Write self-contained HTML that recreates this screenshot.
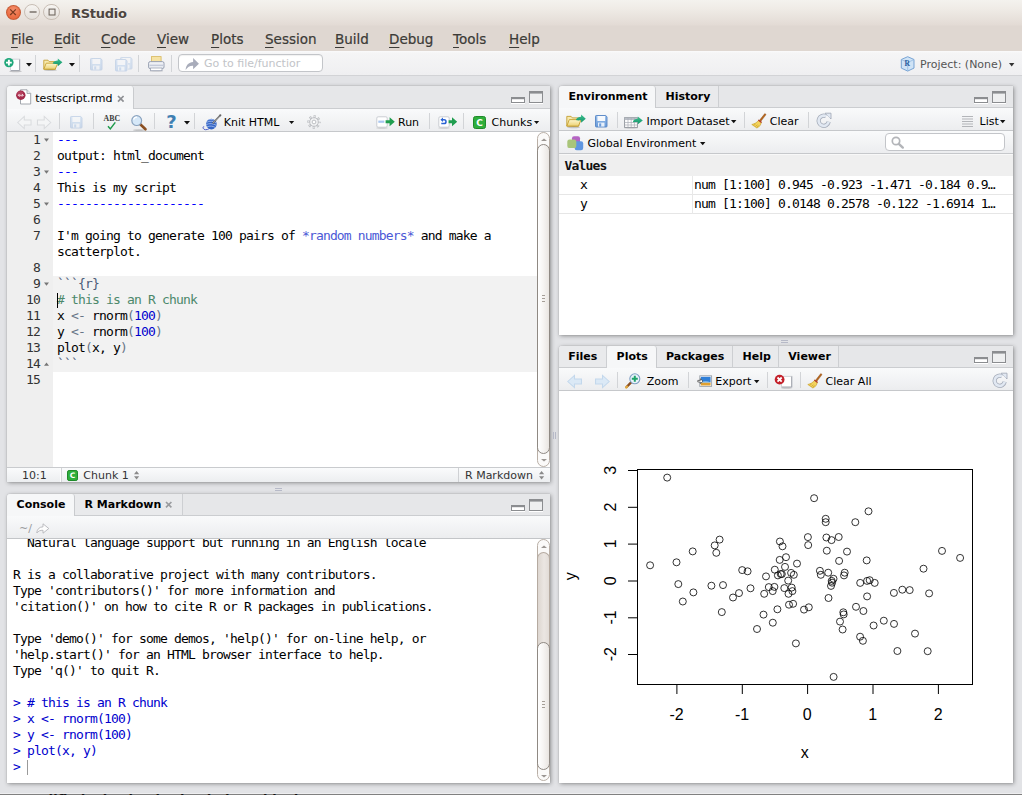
<!DOCTYPE html>
<html><head><meta charset="utf-8"><title>RStudio</title>
<style>
*{box-sizing:border-box;margin:0;padding:0}
html,body{width:1022px;height:795px;overflow:hidden}
body{position:relative;background:#e2e3e6;font-family:"DejaVu Sans","Liberation Sans",sans-serif;font-size:11px;color:#000}
.a{position:absolute}
svg{position:absolute;overflow:visible}
#titlebar{left:0;top:0;width:1022px;height:51px;background:linear-gradient(#f4f2ee 0,#efebe6 9px,#e3dbd5 25px,#dfd7d1 26px,#dfd7d1 51px)}
#title{left:71px;top:5px;font:bold 13px/17px "DejaVu Sans","Liberation Sans",sans-serif;color:#4c4540;letter-spacing:-.27px;text-shadow:0 1px 0 rgba(255,255,255,.6)}
.menu{-webkit-text-stroke:.2px #3c3b37;top:30px;font:13.5px/18px "DejaVu Sans","Liberation Sans",sans-serif;color:#3c3b37;white-space:nowrap}
.menu u{text-decoration:underline;text-underline-offset:3px}
.wb{border-radius:50%;width:15px;height:15px;top:5px}
#toolbar{left:0;top:51px;width:1022px;height:25px;background:linear-gradient(#fafafb 0,#f5f5f6 2px,#efeff1);border-bottom:1px solid #d2d3d6}
.pane{background:#fff;border-radius:3px 0 0 0;box-shadow:1px 1px 4px rgba(0,0,0,.36),0 0 1px rgba(0,0,0,.3);overflow:hidden}
.tabbar{left:0;top:0;right:0;height:22px;background:#e6e7e9;border-bottom:1px solid #cbcdd0}
.tab{top:0;height:22px;font-weight:bold;line-height:21px;white-space:nowrap;color:#000}
.tab.act{background:#f6f7f8;height:22px;border-right:1px solid #c9cbce;border-radius:3px 3px 0 0}
.tab.in{border-right:1px solid #cdcfd2;border-bottom:1px solid #cbcdd0;background:#e9eaec}
.tb{left:0;right:0;background:linear-gradient(#f9fafb,#ecedef);border-bottom:1px solid #c6c8cb;white-space:nowrap}
.t{white-space:nowrap;line-height:14px;height:15px;padding-top:1px}
.sep{width:1px;background:#d2d4d7}
.mono{font-family:"DejaVu Sans Mono","Liberation Mono",monospace;font-size:13px;letter-spacing:-.83px;white-space:pre;line-height:16px}
.dd{width:0;height:0;border-left:3.5px solid transparent;border-right:3.5px solid transparent;border-top:4px solid #111}
.k{color:#0000ff}
.em{color:#4b59d6}
.ch{color:#4a5a78}
.cm{color:#4c886b}
.op{color:#687687}
.nu{color:#0000cd}
.bl{color:#0000cd}

</style></head><body>
<div id="titlebar" class="a"></div>
<div class="a wb" style="left:5.700px;top:4.500px;width:15.400px;height:15.400px;background:radial-gradient(circle at 50% 30%,#f4906e,#ec6f45 60%,#e5623a);border:1px solid rgba(170,75,40,.55)"></div>
<svg style="left:9.400px;top:8.200px" width="8" height="8"><path d="M1.200 1.400L6.800 7M6.800 1.400L1.200 7" stroke="#7a3a20" stroke-width="1.200"/></svg>
<div class="a wb" style="left:24px;top:4.100px;width:16.400px;height:16.400px;background:linear-gradient(#f7f5f2,#e4dfda);border:1px solid #c8beb5"></div>
<svg style="left:28.500px;top:8.200px" width="8" height="8"><path d="M0.600 4H7.600" stroke="#5d544c" stroke-width="1.200"/></svg>
<div class="a wb" style="left:43.300px;top:4.100px;width:16.400px;height:16.400px;background:linear-gradient(#f7f5f2,#e4dfda);border:1px solid #c8beb5"></div>
<svg style="left:47.500px;top:8.300px" width="8" height="8"><rect x="1.100" y="1.100" width="5.900" height="5.900" fill="none" stroke="#6d645c" stroke-width="1.050"/></svg>
<div id="title" class="a">RStudio</div>
<div class="a menu" style="left:11px"><u>F</u>ile</div>
<div class="a menu" style="left:54px"><u>E</u>dit</div>
<div class="a menu" style="left:101px"><u>C</u>ode</div>
<div class="a menu" style="left:157px"><u>V</u>iew</div>
<div class="a menu" style="left:211px"><u>P</u>lots</div>
<div class="a menu" style="left:265px"><u>S</u>ession</div>
<div class="a menu" style="left:335px"><u>B</u>uild</div>
<div class="a menu" style="left:389px"><u>D</u>ebug</div>
<div class="a menu" style="left:453px"><u>T</u>ools</div>
<div class="a menu" style="left:509px"><u>H</u>elp</div>
<div id="toolbar" class="a"></div>

<svg width="0" height="0" style="left:0;top:0"><defs>
<linearGradient id="gFold" x1="0" y1="0" x2="0" y2="1"><stop offset="0" stop-color="#fdf6cf"/><stop offset="1" stop-color="#ecd273"/></linearGradient>
<linearGradient id="gFlop" x1="0" y1="0" x2="0" y2="1"><stop offset="0" stop-color="#96bdea"/><stop offset="1" stop-color="#6a9bd9"/></linearGradient>
<linearGradient id="gGreen" x1="0" y1="0" x2="0" y2="1"><stop offset="0" stop-color="#3fc08f"/><stop offset="1" stop-color="#12946a"/></linearGradient>
</defs></svg>
<!-- main toolbar -->
<svg style="left:4px;top:56.500px" width="20" height="16"><ellipse cx="11.500" cy="14.300" rx="6.500" ry=".9" fill="#000" opacity=".2"/><path d="M6.500 2.200h9.500v11.600h-9.500z" fill="#fff" stroke="#c9ccd2" stroke-width=".8"/><path d="M15.500 2.500v11h-8.500" fill="none" stroke="#9fa3ab" stroke-width=".9"/><circle cx="4.900" cy="5.600" r="4.700" fill="#1fa77a"/><path d="M4.900 2.700v5.800M2 5.600h5.800" stroke="#fff" stroke-width="1.900"/></svg>
<svg style="left:25.500px;top:62.500px" width="6" height="4"><g><path d="M0 0h6l-3 3.600z" fill="#111"/></g></svg>
<div class="a sep" style="left:35px;top:55px;height:17px"></div>
<svg style="left:43px;top:57.500px" width="21" height="14"><g><path d="M0.8 2.2h4.2l1.2 1.4h6.3v7.6h-11.7z" fill="#f6e9ad" stroke="#c6a136" stroke-width=".9"/><path d="M0.8 11.2l2.4-6h11.6l-2.6 6z" fill="url(#gFold)" stroke="#c8a233" stroke-width=".9"/><path d="M9.6 5.6c1-2.2 3-3 5.2-3v-2.2l4.6 3.9-4.6 3.9v-2.3c-2 0-3.6 .2-5.200 -.3z" fill="url(#gGreen)"/><ellipse cx="7.500" cy="12.3" rx="6.500" ry=".8" fill="#000" opacity=".18"/></g></svg>
<svg style="left:68.500px;top:62.500px" width="6" height="4"><g><path d="M0 0h6l-3 3.600z" fill="#111"/></g></svg>
<div class="a sep" style="left:79px;top:55px;height:17px"></div>
<svg style="left:90px;top:58px;opacity:.28" width="13" height="13"><g><path d="M.5 1.300a.8 .8 0 0 1 .8 -.8h9.400l1.300 1.300v9.400a.8 .8 0 0 1 -.8 .8h-9.900a.8 .8 0 0 1 -.8 -.8z" fill="url(#gFlop)" stroke="#5584c4" stroke-width=".9"/><rect x="2.400" y="1" width="7.700" height="5" fill="#f6f9fd"/><rect x="3" y="7.600" width="6.500" height="4" fill="#e8f0fa"/><rect x="4.200" y="8.400" width="2" height="3.200" fill="#6a9bd9"/></g></svg>
<svg style="left:119.500px;top:56.500px;opacity:.24" width="13" height="13"><g><path d="M.5 1.300a.8 .8 0 0 1 .8 -.8h9.400l1.300 1.300v9.400a.8 .8 0 0 1 -.8 .8h-9.900a.8 .8 0 0 1 -.8 -.8z" fill="url(#gFlop)" stroke="#5584c4" stroke-width=".9"/><rect x="2.400" y="1" width="7.700" height="5" fill="#f6f9fd"/><rect x="3" y="7.600" width="6.500" height="4" fill="#e8f0fa"/><rect x="4.200" y="8.400" width="2" height="3.200" fill="#6a9bd9"/></g></svg>
<svg style="left:114.500px;top:59px" width="13" height="13"><rect x="0" y="0" width="13" height="12.500" fill="#f3f3f5"/><g opacity=".28"><path d="M.5 1.300a.8 .8 0 0 1 .8 -.8h9.400l1.300 1.300v9.400a.8 .8 0 0 1 -.8 .8h-9.900a.8 .8 0 0 1 -.8 -.8z" fill="url(#gFlop)" stroke="#5584c4" stroke-width=".9"/><rect x="2.400" y="1" width="7.700" height="5" fill="#f6f9fd"/><rect x="3" y="7.600" width="6.500" height="4" fill="#e8f0fa"/><rect x="4.200" y="8.400" width="2" height="3.200" fill="#6a9bd9"/></g></svg>
<div class="a sep" style="left:138px;top:55px;height:17px"></div>
<svg style="left:148px;top:55.500px" width="17" height="16"><ellipse cx="8.300" cy="15" rx="7" ry=".8" fill="#000" opacity=".15"/><rect x="3.500" y=".6" width="9.600" height="7" fill="#f6e3a4" stroke="#d7b75c" stroke-width=".8"/><rect x=".6" y="5.600" width="15.400" height="7" rx="1.600" fill="#eef0f5" stroke="#8e97ab" stroke-width=".9"/><rect x="1.500" y="8.600" width="13.600" height="1.500" fill="#c5cbda"/><rect x="2.600" y="12" width="11.400" height="2.700" fill="#fff" stroke="#9aa1b2" stroke-width=".8"/></svg>
<div class="a sep" style="left:171px;top:55px;height:17px"></div>
<div class="a" style="left:178px;top:54px;width:145px;height:18px;border:1px solid #c3c5c9;border-radius:4px;background:#fff;box-shadow:inset 0 1px 1px rgba(0,0,0,.06)"></div>
<svg style="left:185px;top:57px" width="14" height="13"><path transform="scale(1.04,1.06)" d="M.6 12.300c.3-4.600 2.800-7.300 7.200-7.600v-3.700l5.600 5.300-5.600 5.300v-3.400c-3.200-.1-5.400 1.200-7.200 4.100z" fill="#a8acba"/></svg>
<div class="a t" style="left:204px;top:56px;color:#c2c4c8">Go to file/functior</div>
<svg style="left:900px;top:55.500px" width="16" height="16"><path d="M7.700 .7l6.300 2.800v8.600l-6.300 3-6.400-3v-8.600z" fill="#cfe3f6" stroke="#6b9bd0" stroke-width=".9"/><path d="M1.500 3.600l6.200 2.900 6.200-2.900M7.700 6.500v8.300" fill="none" stroke="#8cb4de" stroke-width=".7"/><text x="4.600" y="9.600" font-family="Liberation Serif,serif" font-weight="bold" font-size="7.500" fill="#2a5d9e">R</text></svg>
<div class="a t" style="left:920px;top:57px;color:#555">Project: (None)</div>
<svg style="left:1008.500px;top:62.500px" width="6" height="4"><path d="M0 0h5.400l-2.700 3.400z" fill="#333"/></svg>

<!-- SOURCE PANE -->
<div class="a pane" style="left:7px;top:86px;width:543px;height:396px">
 <div class="a tabbar" style="height:23px"></div>
 <div class="a tab act" style="left:0;width:127px;height:23px"></div>
 <svg style="left:9px;top:3px" width="16" height="16"><path d="M4.500 .8h6.500l3.700 3.700v10.500h-10.200z" fill="#fff" stroke="#9a9ea6" stroke-width=".9"/><path d="M11 .8v3.700h3.700" fill="#e8e9ec" stroke="#9a9ea6" stroke-width=".8"/><circle cx="4.800" cy="6.300" r="4.700" fill="#a32a4a"/><circle cx="4.300" cy="5.300" r="3" fill="#c4546f" opacity=".55"/><path d="M2.300 6.300h5M3.600 5l-1.300 1.300 1.300 1.300M6 5l1.300 1.300-1.300 1.300" stroke="#f3d9df" stroke-width=".9" fill="none"/></svg>
 <div class="a t" style="left:28.200px;top:5px;font-size:11px">testscript.rmd</div>
 <svg style="left:109.500px;top:9px" width="8" height="8"><path d="M1 1l5.600 5.600M6.600 1l-5.600 5.600" stroke="#8e9094" stroke-width="1.700"/></svg>
 <svg style="left:504px;top:11px" width="14" height="6"><g><rect x="0" y="6" width="14" height="1" fill="#fff"/><rect x=".5" y=".5" width="13" height="5" fill="#fff" stroke="#8b8d90"/><rect x="0" y="0" width="14" height="2.200" fill="#8b8d90"/></g></svg>
 <svg style="left:522px;top:5px" width="14" height="12"><g><rect x="0" y="12" width="14" height="1" fill="#fff"/><rect x=".5" y=".5" width="13" height="11" fill="#eeeff0" stroke="#8b8d90"/><rect x="0" y="0" width="14" height="2.600" fill="#8b8d90"/></g></svg>
 <!-- toolbar -->
 <div class="a tb" style="top:23px;height:23px"></div>
 <svg style="left:10px;top:30px" width="15" height="13" fill="#f4f5f6" stroke="#d9dbde" stroke-width="1"><g transform="scale(1.04,1)"><g><path d="M.7 6.500l6.300-6v3.500h6.500v5h-6.500v3.500z"/></g></g></svg>
 <svg style="left:30px;top:30px" width="15" height="13" fill="#f4f5f6" stroke="#d9dbde" stroke-width="1"><g transform="translate(14.500,0) scale(-1.04,1)"><g><path d="M.7 6.500l6.300-6v3.500h6.500v5h-6.500v3.500z"/></g></g></svg>
 <div class="a sep" style="left:52px;top:27px;height:16px"></div>
 <svg style="left:63px;top:30px;opacity:.28" width="13" height="13"><g><path d="M.5 1.300a.8 .8 0 0 1 .8 -.8h9.400l1.300 1.300v9.400a.8 .8 0 0 1 -.8 .8h-9.900a.8 .8 0 0 1 -.8 -.8z" fill="url(#gFlop)" stroke="#5584c4" stroke-width=".9"/><rect x="2.400" y="1" width="7.700" height="5" fill="#f6f9fd"/><rect x="3" y="7.600" width="6.500" height="4" fill="#e8f0fa"/><rect x="4.200" y="8.400" width="2" height="3.200" fill="#6a9bd9"/></g></svg>
 <div class="a sep" style="left:86px;top:27px;height:16px"></div>
 <svg style="left:95.500px;top:28.500px" width="18" height="16"><text x="0.600" y="6.200" font-family="Liberation Serif,serif" font-weight="bold" font-size="7.400" fill="#3a3a3a" textLength="16.500" lengthAdjust="spacingAndGlyphs">ABC</text><path d="M5 11.300l2.300 2.600 5-6.500" fill="none" stroke="#1d9a4a" stroke-width="1.500"/></svg>
 <svg style="left:122.500px;top:28px" width="18" height="18"><ellipse cx="9" cy="16.200" rx="6" ry=".9" fill="#000" opacity=".18"/><path d="M10 10l5.500 5.300" stroke="#8a4f22" stroke-width="2.600" stroke-linecap="round"/><circle cx="6.700" cy="6.600" r="4.900" fill="#d6e8f8" stroke="#8aa3bf" stroke-width="1.200"/><path d="M3.600 5.600a3.400 3.400 0 0 1 3.400 -2.500" stroke="#fff" stroke-width="1.200" fill="none"/></svg>
 <div class="a sep" style="left:147px;top:27px;height:16px"></div>
 <div class="a" style="left:159.200px;top:25px;font:bold 18px/22px 'DejaVu Sans','Liberation Sans',sans-serif;color:#3f7fb2">?</div>
 <svg style="left:176.500px;top:35px" width="6" height="4"><g><path d="M0 0h6l-3 3.600z" fill="#111"/></g></svg>
 <div class="a sep" style="left:187px;top:27px;height:16px"></div>
 <svg style="left:193px;top:27.700px" width="22" height="18"><path d="M9.500 14.500c-3 1.800-5.500 1.500-6.300-.2-.5-1.200.3-1.900 1-1.600" fill="none" stroke="#3b4ec2" stroke-width=".9"/><circle cx="11.400" cy="10.100" r="5.300" fill="#3565c4"/><path d="M6.600 8.300c3-1.600 6.600-1.300 9.400.6M6.200 10.600c3.300-1.600 7.200-1.200 10.200 .8M7 12.900c2.800-1.300 5.800-1 8.400 .6M8.500 5.900c2.300-.8 4.800-.4 6.700 1" fill="none" stroke="#a9c3f4" stroke-width=".8"/><path d="M12.600 9.500l7.400-8" stroke="#555" stroke-width="1.500"/><path d="M12.600 9.500l7.400-8" stroke="#ddd" stroke-width=".5"/><circle cx="20.300" cy="1.300" r="1.100" fill="#666"/></svg>
 <div class="a t" style="left:216.800px;top:29px">Knit HTML</div>
 <svg style="left:281.700px;top:35.300px" width="6" height="4"><path d="M0 0h5.200l-2.600 3z" fill="#111"/></svg>
 <svg style="left:300px;top:29px" width="14" height="14"><circle cx="7" cy="7" r="5.500" fill="none" stroke="#bcbec2" stroke-width="2.400" stroke-dasharray="2.160 2.160" stroke-dashoffset="1.080"/><circle cx="7" cy="7" r="5.500" fill="none" stroke="#f3f4f5" stroke-width=".9" stroke-dasharray="1.300 3.020" stroke-dashoffset=".650"/><circle cx="7" cy="7" r="4.300" fill="#f4f5f6" stroke="#bcbec2" stroke-width="1"/><circle cx="7" cy="7" r="1.900" fill="#fff" stroke="#bcbec2" stroke-width="1"/></svg>
 <svg style="left:369px;top:29.500px" width="20" height="13"><ellipse cx="6" cy="12" rx="6" ry=".8" fill="#000" opacity=".15"/><rect x=".8" y=".8" width="10.400" height="10.400" rx="1.300" fill="#fff" stroke="#c5c8ce" stroke-width=".9"/><rect x="2.300" y="4.600" width="6" height="2.200" fill="#a9c6f0"/><path d="M9.600 4.300h4v-3l5.200 4.500-5.200 4.500v-3h-4z" fill="#1f9d4f"/></svg>
 <div class="a t" style="left:391px;top:29px">Run</div>
 <div class="a sep" style="left:422px;top:27px;height:16px"></div>
 <svg style="left:431px;top:29.500px" width="20" height="13"><ellipse cx="6" cy="12" rx="6" ry=".8" fill="#000" opacity=".15"/><rect x=".8" y=".8" width="10.400" height="10.400" rx="1.300" fill="#fff" stroke="#c5c8ce" stroke-width=".9"/><path d="M3.300 7.600h2.800a1.900 1.900 0 0 0 0 -3.800h-1.600" fill="none" stroke="#2a63d4" stroke-width="1.500"/><path d="M5 1.600l-2.600 2.200 2.600 2.200z" fill="#2a63d4"/><path d="M10.600 4.300h3.400v-3l5.200 4.500-5.200 4.500v-3h-3.400z" fill="#1f9d4f"/></svg>
 <div class="a sep" style="left:455.500px;top:27px;height:16px"></div>
 <svg style="left:465.500px;top:29.500px" width="13" height="13"><g><rect x=".5" y=".5" width="12" height="12" rx="2" fill="#2fae3b" stroke="#1e8a2a"/></g><text x="3.300" y="10" font-family="DejaVu Sans,sans-serif" font-weight="bold" font-size="9" fill="#fff">C</text></svg>
 <div class="a t" style="left:484.500px;top:29px">Chunks</div>
 <svg style="left:527px;top:35.300px" width="6" height="4"><path d="M0 0h5.200l-2.600 3z" fill="#111"/></svg>
 <!-- editor -->
 <div class="a" style="left:0;top:46px;width:46px;height:335px;background:#efefef"></div>
 <div class="a" style="left:46px;top:190px;width:484px;height:96px;background:#f2f2f2"></div>
 <div class="a mono" id="gut" style="left:0;top:46px;width:33px;text-align:right;color:#333">1
2
3
4
5
6
7

8
9
10
11
12
13
14
15</div>
 <div class="a mono" id="code" style="left:50px;top:46px;color:#000"><span class="k">---</span>
output: html_document
<span class="k">---</span>
This is my script
<span class="k">---------------------</span>

I'm going to generate 100 pairs of <span class="em">*random numbers*</span> and make a
scatterplot.

<span class="ch">```{r}</span>
<span class="cm"># this is an R chunk</span>
x <span class="op">&lt;-</span> rnorm<span class="op">(</span><span class="nu">100</span><span class="op">)</span>
y <span class="op">&lt;-</span> rnorm<span class="op">(</span><span class="nu">100</span><span class="op">)</span>
plot<span class="op">(</span>x, y<span class="op">)</span>
<span class="ch">```</span>
</div>
 <div class="a" style="left:50px;top:207px;width:1px;height:15px;background:#000"></div>
 <!-- fold arrows -->
 <svg style="left:0;top:46px" width="46" height="336" fill="#777"><path d="M37 6.500h5l-2.500 3.200zM37 38.500h5l-2.500 3.200zM37 70.500h5l-2.500 3.200zM37 150.500h5l-2.500 3.200zM37 233.700h5l-2.500-3.200z"/></svg>
 <!-- scrollbar -->
 <div class="a" style="left:530px;top:46px;width:13px;height:335px;background:#fff"></div>
 <div class="a" style="left:530px;top:46px;width:13px;height:335px;border:1px solid #b9afa6;border-radius:6.500px;background:#fbfaf9"></div>
 <div class="a" style="left:530px;top:58px;width:13px;height:310px;border:1px solid #8f8983;border-radius:6.500px;background:linear-gradient(90deg,#fff,#f6f4f2 50%,#e9e5e1)"></div>
 <svg style="left:533.500px;top:52px" width="6" height="3"><path d="M0 3h6l-3-2.600z" fill="#9c9793"/></svg>
 <svg style="left:533.500px;top:372.500px" width="6" height="3"><path d="M0 0h6l-3 2.600z" fill="#9c9793"/></svg>
 <svg style="left:535px;top:209px" width="5" height="8"><path d="M0 .5h3M0 3.500h3M0 6.500h3" stroke="#a59e97" stroke-width="1"/></svg>
 <!-- status bar -->
 <div class="a" style="left:0;top:381px;width:543px;height:15px;background:linear-gradient(#fafbfc,#eceef0);border-top:1px solid #c9cbce"></div>
 <div class="a t" style="left:15px;top:382px;color:#333">10:1</div>
 <div class="a" style="left:54px;top:382px;width:1px;height:14px;background:#d3d5d8;box-shadow:-1px 0 0 #fdfdfd"></div>
 <svg style="left:60px;top:383.500px" width="11" height="11"><rect x=".5" y=".5" width="10" height="10" rx="1.600" fill="#2fae3b" stroke="#1e8a2a"/><text x="2.700" y="8.300" font-family="DejaVu Sans,sans-serif" font-weight="bold" font-size="7.500" fill="#fff">C</text></svg>
 <div class="a t" style="left:76.300px;top:382px;color:#333">Chunk 1</div>
 <svg style="left:126.500px;top:385px" width="6" height="9" fill="#8a8a8a"><path d="M0 3.200h5.200l-2.600-3.200zM0 5.200h5.200l-2.600 3.200z"/></svg>
 <div class="a" style="left:451px;top:382px;width:1px;height:14px;background:#cfd1d4"></div>
 <div class="a t" style="left:458px;top:382px;color:#333">R Markdown</div>
 <svg style="left:531.500px;top:385px" width="6" height="9" fill="#8a8a8a"><path d="M0 3.200h5.200l-2.600-3.200zM0 5.200h5.200l-2.600 3.200z"/></svg>
</div>

<!-- CONSOLE PANE -->
<div class="a pane" style="left:7px;top:494px;width:543px;height:289px">
 <div class="a tabbar" style="height:22px"></div>
 <div class="a tab act" style="left:0;width:68px;height:22px"></div>
 <div class="a tab in" style="left:68px;width:108px;height:22px"></div>
 <div class="a t" style="left:9.600px;top:3px;font-weight:bold">Console</div>
 <div class="a t" style="left:77.500px;top:3px;font-weight:bold">R Markdown</div>
 <svg style="left:158px;top:7px" width="8" height="8"><path d="M1 1l5.400 5.400M6.400 1l-5.400 5.400" stroke="#9a9c9f" stroke-width="1.700"/></svg>
 <svg style="left:504px;top:11px" width="14" height="6"><g><rect x="0" y="6" width="14" height="1" fill="#fff"/><rect x=".5" y=".5" width="13" height="5" fill="#fff" stroke="#8b8d90"/><rect x="0" y="0" width="14" height="2.200" fill="#8b8d90"/></g></svg>
 <svg style="left:522px;top:5px" width="14" height="12"><g><rect x="0" y="12" width="14" height="1" fill="#fff"/><rect x=".5" y=".5" width="13" height="11" fill="#eeeff0" stroke="#8b8d90"/><rect x="0" y="0" width="14" height="2.600" fill="#8b8d90"/></g></svg>
 <div class="a tb" style="top:22px;height:23px;border-bottom:1px solid #c3c5c8"></div>
 <div class="a t" style="left:12px;top:26.500px;color:#9a9c9f">~/</div>
 <svg style="left:29px;top:28.500px" width="14" height="11"><path d="M.8 10c.2-3.800 2.400-6 6.200-6.200v-3l5.800 4.700-5.800 4.700v-2.900c-2.700-.1-4.600 .6-6.200 2.700z" fill="#fdfdfd" stroke="#b4b6ba" stroke-width=".9"/></svg>
 <div class="a" style="left:0;top:45px;width:530px;height:244px;overflow:hidden">
 <div class="a mono" style="left:6px;top:-4px;color:#000">  Natural language support but running in an English locale

R is a collaborative project with many contributors.
Type 'contributors()' for more information and
'citation()' on how to cite R or R packages in publications.

Type 'demo()' for some demos, 'help()' for on-line help, or
'help.start()' for an HTML browser interface to help.
Type 'q()' to quit R.

<span class="bl">&gt; # this is an R chunk
&gt; x &lt;- rnorm(100)
&gt; y &lt;- rnorm(100)
&gt; plot(x, y)
&gt; </span></div>
 <div class="a" style="left:20px;top:221px;width:1px;height:15px;background:#9a9a9a"></div>
 </div>
 <!-- scrollbar -->
 <div class="a" style="left:530px;top:45px;width:13px;height:242px;border:1px solid #b9afa6;border-radius:6.500px;background:#fbfaf9"></div>
 <div class="a" style="left:530px;top:58px;width:13px;height:100px;border:1px solid #b5aaa0;border-bottom:0;border-radius:6.500px 6.500px 0 0;background:linear-gradient(90deg,#ddd6d0,#ebe6e2 55%,#e2dcd7)"></div>
 <div class="a" style="left:530px;top:148px;width:13px;height:128px;border:1px solid #8f8983;border-radius:6.500px;background:linear-gradient(90deg,#fff,#f6f4f2 50%,#e9e5e1)"></div>
 <svg style="left:533.500px;top:51px" width="6" height="3"><path d="M0 3h6l-3-2.600z" fill="#9c9793"/></svg>
 <svg style="left:533.500px;top:281px" width="6" height="3"><path d="M0 0h6l-3 2.600z" fill="#9c9793"/></svg>
 <svg style="left:535px;top:207px" width="5" height="8"><path d="M0 .5h3M0 3.500h3M0 6.500h3" stroke="#a59e97" stroke-width="1"/></svg>
</div>
<div class="a" style="left:0;top:793px;width:1022px;height:2px;background:#808080;border-top:1px solid #eeeef0"></div>
<div class="a" style="left:22px;top:793px;font:bold 13px/14px 'DejaVu Sans','Liberation Sans',sans-serif;color:#111;white-space:nowrap">Modified: checkpoint loaded on this date</div>
<!-- grips -->
<svg style="left:275px;top:488px" width="7" height="3"><path d="M0 .5h7M0 2.500h7" stroke="#b7bac8" stroke-width="1"/></svg>
<svg style="left:781px;top:340px" width="7" height="3"><path d="M0 .5h7M0 2.500h7" stroke="#b7bac8" stroke-width="1"/></svg>
<svg style="left:553px;top:432px" width="3" height="7"><path d="M.5 0v7M2.500 0v7" stroke="#b7bac8" stroke-width="1"/></svg>

<!-- ENVIRONMENT PANE -->
<div class="a pane" style="left:559px;top:86px;width:454px;height:249px">
 <div class="a tabbar" style="height:22px"></div>
 <div class="a tab act" style="left:0;width:97px;height:22px"></div>
 <div class="a tab in" style="left:97px;width:63px;height:22px"></div>
 <div class="a t" style="left:9.500px;top:3px;font-weight:bold">Environment</div>
 <div class="a t" style="left:106.500px;top:3px;font-weight:bold">History</div>
 <svg style="left:415px;top:11px" width="14" height="6"><g><rect x="0" y="6" width="14" height="1" fill="#fff"/><rect x=".5" y=".5" width="13" height="5" fill="#fff" stroke="#8b8d90"/><rect x="0" y="0" width="14" height="2.200" fill="#8b8d90"/></g></svg>
 <svg style="left:433px;top:5px" width="14" height="12"><g><rect x="0" y="12" width="14" height="1" fill="#fff"/><rect x=".5" y=".5" width="13" height="11" fill="#eeeff0" stroke="#8b8d90"/><rect x="0" y="0" width="14" height="2.600" fill="#8b8d90"/></g></svg>
 <div class="a tb" style="top:22px;height:23px"></div>
 <svg style="left:7px;top:27.600px" width="21" height="14"><g transform="scale(1.02,1.08)"><g><path d="M0.8 2.2h4.2l1.2 1.4h6.3v7.6h-11.7z" fill="#f6e9ad" stroke="#c6a136" stroke-width=".9"/><path d="M0.8 11.2l2.4-6h11.6l-2.6 6z" fill="url(#gFold)" stroke="#c8a233" stroke-width=".9"/><path d="M9.6 5.6c1-2.2 3-3 5.2-3v-2.2l4.6 3.9-4.6 3.9v-2.3c-2 0-3.6 .2-5.200 -.3z" fill="url(#gGreen)"/><ellipse cx="7.500" cy="12.3" rx="6.500" ry=".8" fill="#000" opacity=".18"/></g></g></svg>
 <svg style="left:36px;top:29px" width="13" height="13"><g><path d="M.5 1.300a.8 .8 0 0 1 .8 -.8h9.400l1.300 1.300v9.400a.8 .8 0 0 1 -.8 .8h-9.900a.8 .8 0 0 1 -.8 -.8z" fill="url(#gFlop)" stroke="#5584c4" stroke-width=".9"/><rect x="2.400" y="1" width="7.700" height="5" fill="#f6f9fd"/><rect x="3" y="7.600" width="6.500" height="4" fill="#e8f0fa"/><rect x="4.200" y="8.400" width="2" height="3.200" fill="#6a9bd9"/></g></svg>
 <div class="a sep" style="left:58px;top:26px;height:16px"></div>
 <svg style="left:65px;top:29px" width="21" height="14"><ellipse cx="7" cy="13" rx="7" ry=".8" fill="#000" opacity=".15"/><rect x=".6" y="2.600" width="12.800" height="9.800" fill="#fdfdfd" stroke="#8d9299" stroke-width=".9"/><rect x=".6" y="2.600" width="12.800" height="2.400" fill="#b9bec6"/><path d="M.6 7.500h12.800M.6 10h12.800M4 2.600v9.800M7.200 2.600v9.800M10.400 2.600v9.800" stroke="#a9aeb6" stroke-width=".7"/><path d="M8.800 7.200c.6-2.400 2.600-3.400 5-3.400v-2.300l5 3.900-5 3.900v-2.300c-2 0-3.600 .2-5 .2z" fill="url(#gGreen)"/></svg>
 <div class="a t" style="left:87.500px;top:28px">Import Dataset</div>
 <svg style="left:171.500px;top:34px" width="6" height="4"><path d="M0 0h5.400l-2.700 3.200z" fill="#111"/></svg>
 <div class="a sep" style="left:185px;top:26px;height:16px"></div>
 <svg style="left:192px;top:26.500px" width="16" height="16"><g><path d="M13.800 .6l1.300 1-5.600 7.200-1.400-1.100z" fill="#b5651d" stroke="#8a4a12" stroke-width=".4"/><path d="M7.600 7.300l2.700 2.100c-.3 2.300-2 4.600-4.400 5.600l-5.100-3.500c2.600-.6 5.300-2 6.800-4.200z" fill="#f3d35e" stroke="#c49a22" stroke-width=".6"/><path d="M2.600 12.300l2-1.200M4.300 13.500l2.100-1.700M5.700 14.400l1.700-2" stroke="#c49a22" stroke-width=".6" fill="none"/><path d="M7.300 7l3.300 2.600" stroke="#b23b2e" stroke-width="1.300"/></g></svg>
 <div class="a t" style="left:210.800px;top:28px">Clear</div>
 <div class="a sep" style="left:249px;top:26px;height:16px"></div>
 <svg style="left:257px;top:25.500px" width="16" height="16"><g><path d="M12.700 9.800a5.100 5.100 0 1 1 -2.600 -5.600" fill="none" stroke="#a6adba" stroke-width="4.200"/><path d="M9.200 1.200h5.800v5.800z" fill="#e1e8f2" stroke="#a6adba" stroke-width=".9"/><path d="M12.700 9.800a5.100 5.100 0 1 1 -2.600 -5.600" fill="none" stroke="#e1e8f2" stroke-width="2.600"/><path d="M10.300 2.200h3.700v3.700z" fill="#e1e8f2"/></g></svg>
 <svg style="left:403px;top:29.500px" width="11" height="11"><path d="M0 .5h11M0 3h11M0 5.500h11M0 8h11M0 10.500h11" stroke="#b3b5b9" stroke-width="1"/></svg>
 <div class="a t" style="left:420.500px;top:28px">List</div>
 <svg style="left:440.500px;top:34px" width="6" height="4"><path d="M0 0h5.400l-2.700 3.200z" fill="#111"/></svg>
 <div class="a tb" style="top:45px;height:23px"></div>
 <svg style="left:7.500px;top:49.500px" width="17" height="15"><rect x="5" y=".3" width="8" height="8" rx="2" fill="#b565c4"/><rect x="7.600" y="5.200" width="8.600" height="9" rx="2.200" fill="#5f96e0"/><rect x=".3" y="3.500" width="9" height="8.600" rx="2.200" fill="#a9c57a"/></svg>
 <div class="a t" style="left:28.400px;top:50px">Global Environment</div>
 <svg style="left:140.500px;top:56px" width="6" height="4"><path d="M0 0h5.400l-2.700 3.200z" fill="#111"/></svg>
 <div class="a" style="left:326px;top:47px;width:120px;height:18px;border:1px solid #c3c5c9;border-radius:4px;background:#fff"></div>
 <svg style="left:332px;top:50px" width="14" height="13"><circle cx="5" cy="5" r="3.700" fill="#fff" stroke="#b3b5b9" stroke-width="1.700"/><path d="M7.800 7.800l4 3.800" stroke="#b3b5b9" stroke-width="2.400" stroke-linecap="round"/></svg>
 <!-- values -->
 <div class="a" style="left:0;top:68px;width:454px;height:22px;background:#efefef;border-top:1px solid #f8f8f8"></div>
 <div class="a mono" style="left:5.500px;top:71.500px;font-weight:bold;color:#111">Values</div>
 <div class="a" style="left:0;top:108px;width:454px;height:1px;background:#e6e6e6"></div>
 <div class="a" style="left:0;top:127px;width:454px;height:1px;background:#e6e6e6"></div>
 <div class="a" style="left:133px;top:90px;width:1px;height:38px;background:#e8e8e8"></div>
 <div class="a mono" style="left:21px;top:91px">x</div>
 <div class="a mono" style="left:21px;top:110px">y</div>
 <div class="a mono" style="left:135px;top:91px">num [1:100] 0.945 -0.923 -1.471 -0.184 0.9…</div>
 <div class="a mono" style="left:135px;top:110px">num [1:100] 0.0148 0.2578 -0.122 -1.6914 1…</div>
</div>

<!-- PLOTS PANE -->
<div class="a pane" style="left:559px;top:346px;width:454px;height:437px">
 <div class="a tabbar" style="height:22px"></div>
 <div class="a tab in" style="left:0;width:48px;height:22px"></div>
 <div class="a tab act" style="left:48px;width:50px;height:22px"></div>
 <div class="a tab in" style="left:98px;width:76px;height:22px"></div>
 <div class="a tab in" style="left:174px;width:46px;height:22px"></div>
 <div class="a tab in" style="left:220px;width:60px;height:22px"></div>
 <div class="a t" style="left:9.300px;top:3px;font-weight:bold">Files</div>
 <div class="a t" style="left:57.600px;top:3px;font-weight:bold">Plots</div>
 <div class="a t" style="left:107px;top:3px;font-weight:bold">Packages</div>
 <div class="a t" style="left:183.500px;top:3px;font-weight:bold">Help</div>
 <div class="a t" style="left:229.300px;top:3px;font-weight:bold">Viewer</div>
 <svg style="left:415px;top:11px" width="14" height="6"><g><rect x="0" y="6" width="14" height="1" fill="#fff"/><rect x=".5" y=".5" width="13" height="5" fill="#fff" stroke="#8b8d90"/><rect x="0" y="0" width="14" height="2.200" fill="#8b8d90"/></g></svg>
 <svg style="left:433px;top:5px" width="14" height="12"><g><rect x="0" y="12" width="14" height="1" fill="#fff"/><rect x=".5" y=".5" width="13" height="11" fill="#eeeff0" stroke="#8b8d90"/><rect x="0" y="0" width="14" height="2.600" fill="#8b8d90"/></g></svg>
 <div class="a tb" style="top:22px;height:23px"></div>
 <svg style="left:8px;top:28.500px" width="15" height="13" fill="#dbe9f6" stroke="#c3d8ec" stroke-width="1"><g transform="scale(1.07,1)"><g><path d="M.7 6.500l6.300-6v3.500h6.500v5h-6.500v3.500z"/></g></g></svg>
 <svg style="left:36px;top:28.500px" width="15" height="13" fill="#dbe9f6" stroke="#c3d8ec" stroke-width="1"><g transform="translate(15,0) scale(-1.07,1)"><g><path d="M.7 6.500l6.300-6v3.500h6.500v5h-6.500v3.500z"/></g></g></svg>
 <div class="a sep" style="left:58px;top:26px;height:16px"></div>
 <svg style="left:66px;top:26.500px" width="16" height="16"><path d="M6.600 8.800l-5 5.200" stroke="#8a4f22" stroke-width="2.400" stroke-linecap="round"/><path d="M2 13.700l-.8 .8" stroke="#e0a63a" stroke-width="2.400" stroke-linecap="round"/><circle cx="9.800" cy="5.800" r="5" fill="#eaf3fb" stroke="#7f9fc2" stroke-width="1.100"/><path d="M9.800 2.800v6M6.800 5.800h6" stroke="#1fa36a" stroke-width="2"/></svg>
 <div class="a t" style="left:87.700px;top:28px">Zoom</div>
 <div class="a sep" style="left:129px;top:26px;height:16px"></div>
 <svg style="left:136.500px;top:28.500px" width="17" height="13"><rect x="3.800" y=".8" width="11.800" height="10.600" fill="#fff" stroke="#9aa0a8" stroke-width=".9"/><rect x="4.800" y="1.800" width="9.800" height="5.600" fill="#2f7fd8"/><path d="M4.800 7.400h9.800v3h-9.800z" fill="#e0a030"/><path d="M4.800 7.400c3-1.600 6.500-1.600 9.800 0" fill="#8fc1ee"/><path d="M1.800 5.400h2.600v-1.600l2.600 2.400-2.600 2.400v-1.600h-2.600z" fill="#fff" stroke="#222" stroke-width=".6"/></svg>
 <div class="a t" style="left:156.300px;top:28px">Export</div>
 <svg style="left:194.500px;top:34px" width="6" height="4"><path d="M0 0h5.400l-2.700 3.200z" fill="#111"/></svg>
 <div class="a sep" style="left:208px;top:26px;height:16px"></div>
 <svg style="left:215px;top:28px" width="19" height="15"><ellipse cx="12.500" cy="14" rx="5.500" ry=".8" fill="#000" opacity=".18"/><rect x="7.500" y="2.300" width="10.500" height="11" fill="#fff" stroke="#c5c8ce" stroke-width=".8"/><path d="M17.600 2.600v10.400h-9.600" fill="none" stroke="#9fa3ab" stroke-width=".9"/><circle cx="5.600" cy="5.600" r="4.900" fill="#c4202a"/><path d="M3.500 3.500l4.200 4.200M7.700 3.500l-4.200 4.200" stroke="#fff" stroke-width="1.800"/></svg>
 <div class="a sep" style="left:241px;top:26px;height:16px"></div>
 <svg style="left:248px;top:26.500px" width="16" height="16"><g><path d="M13.800 .6l1.300 1-5.600 7.200-1.400-1.100z" fill="#b5651d" stroke="#8a4a12" stroke-width=".4"/><path d="M7.600 7.300l2.700 2.100c-.3 2.300-2 4.600-4.400 5.600l-5.100-3.500c2.600-.6 5.300-2 6.800-4.200z" fill="#f3d35e" stroke="#c49a22" stroke-width=".6"/><path d="M2.600 12.300l2-1.200M4.300 13.500l2.100-1.700M5.700 14.400l1.700-2" stroke="#c49a22" stroke-width=".6" fill="none"/><path d="M7.300 7l3.300 2.600" stroke="#b23b2e" stroke-width="1.300"/></g></svg>
 <div class="a t" style="left:266.600px;top:28px">Clear All</div>
 <svg style="left:433px;top:26px" width="16" height="16"><g><path d="M12.700 9.800a5.100 5.100 0 1 1 -2.600 -5.600" fill="none" stroke="#a6adba" stroke-width="4.200"/><path d="M9.200 1.200h5.800v5.800z" fill="#e1e8f2" stroke="#a6adba" stroke-width=".9"/><path d="M12.700 9.800a5.100 5.100 0 1 1 -2.600 -5.600" fill="none" stroke="#e1e8f2" stroke-width="2.600"/><path d="M10.300 2.200h3.700v3.700z" fill="#e1e8f2"/></g></svg>
<svg style="left:0;top:0" width="454" height="437" font-family="Liberation Sans,Arial,sans-serif" font-size="16px" fill="#000"><g fill="none" stroke="#000" stroke-width=".8"><circle cx="108.2" cy="131.6" r="3.5"/><circle cx="91.1" cy="219.3" r="3.5"/><circle cx="117.5" cy="216.3" r="3.5"/><circle cx="133.7" cy="205.4" r="3.5"/><circle cx="155.7" cy="199.4" r="3.5"/><circle cx="160.6" cy="193.6" r="3.5"/><circle cx="157.3" cy="206.8" r="3.5"/><circle cx="183.2" cy="224.1" r="3.5"/><circle cx="188.6" cy="225.3" r="3.5"/><circle cx="207" cy="230.4" r="3.5"/><circle cx="220.9" cy="195.5" r="3.5"/><circle cx="223.5" cy="200.3" r="3.5"/><circle cx="227" cy="211.2" r="3.5"/><circle cx="220.7" cy="213.9" r="3.5"/><circle cx="238" cy="217.6" r="3.5"/><circle cx="226" cy="220.9" r="3.5"/><circle cx="215.8" cy="223.7" r="3.5"/><circle cx="248.9" cy="191.1" r="3.5"/><circle cx="249.2" cy="199.1" r="3.5"/><circle cx="218.9" cy="229.4" r="3.5"/><circle cx="222.8" cy="228.1" r="3.5"/><circle cx="232.1" cy="226.9" r="3.5"/><circle cx="234.8" cy="228.8" r="3.5"/><circle cx="255.1" cy="152.2" r="3.5"/><circle cx="309.5" cy="165.3" r="3.5"/><circle cx="266.7" cy="172.8" r="3.5"/><circle cx="266.7" cy="176.2" r="3.5"/><circle cx="296.3" cy="176.2" r="3.5"/><circle cx="267.4" cy="191.5" r="3.5"/><circle cx="272.5" cy="194.1" r="3.5"/><circle cx="279.7" cy="191" r="3.5"/><circle cx="267.8" cy="204.7" r="3.5"/><circle cx="288" cy="205.6" r="3.5"/><circle cx="280.1" cy="214.9" r="3.5"/><circle cx="307.7" cy="214.4" r="3.5"/><circle cx="383" cy="204.9" r="3.5"/><circle cx="401.1" cy="211.9" r="3.5"/><circle cx="364.5" cy="222.7" r="3.5"/><circle cx="260.9" cy="224.8" r="3.5"/><circle cx="261.8" cy="228.8" r="3.5"/><circle cx="269.2" cy="226.7" r="3.5"/><circle cx="285.7" cy="226.7" r="3.5"/><circle cx="285" cy="229.4" r="3.5"/><circle cx="119.3" cy="238.1" r="3.5"/><circle cx="134.4" cy="246.4" r="3.5"/><circle cx="123.8" cy="255.5" r="3.5"/><circle cx="152.4" cy="239.7" r="3.5"/><circle cx="164" cy="239.1" r="3.5"/><circle cx="162.8" cy="266.1" r="3.5"/><circle cx="174" cy="251.5" r="3.5"/><circle cx="180" cy="247.1" r="3.5"/><circle cx="191.5" cy="242.3" r="3.5"/><circle cx="205.2" cy="247.8" r="3.5"/><circle cx="209.8" cy="241.1" r="3.5"/><circle cx="215.4" cy="240.9" r="3.5"/><circle cx="213.7" cy="245.1" r="3.5"/><circle cx="229.2" cy="234.6" r="3.5"/><circle cx="225.3" cy="242.1" r="3.5"/><circle cx="232.7" cy="241.6" r="3.5"/><circle cx="233.4" cy="245.1" r="3.5"/><circle cx="229.5" cy="247.8" r="3.5"/><circle cx="230" cy="258.7" r="3.5"/><circle cx="234.1" cy="257.8" r="3.5"/><circle cx="218.4" cy="263.3" r="3.5"/><circle cx="204.5" cy="268.6" r="3.5"/><circle cx="213.8" cy="276.7" r="3.5"/><circle cx="198" cy="283" r="3.5"/><circle cx="236.9" cy="297.4" r="3.5"/><circle cx="245" cy="263.6" r="3.5"/><circle cx="249.8" cy="261.3" r="3.5"/><circle cx="274.5" cy="232.8" r="3.5"/><circle cx="272.7" cy="234.9" r="3.5"/><circle cx="273.1" cy="236.7" r="3.5"/><circle cx="272" cy="239.9" r="3.5"/><circle cx="301.2" cy="236.9" r="3.5"/><circle cx="308.1" cy="234.9" r="3.5"/><circle cx="310.7" cy="234.2" r="3.5"/><circle cx="315.7" cy="236.9" r="3.5"/><circle cx="269.5" cy="252" r="3.5"/><circle cx="308.1" cy="250.4" r="3.5"/><circle cx="334.9" cy="246.9" r="3.5"/><circle cx="343.3" cy="243.7" r="3.5"/><circle cx="350.7" cy="244.1" r="3.5"/><circle cx="370.1" cy="247.4" r="3.5"/><circle cx="297" cy="260.8" r="3.5"/><circle cx="304.4" cy="265" r="3.5"/><circle cx="284.3" cy="266.3" r="3.5"/><circle cx="284.7" cy="268.4" r="3.5"/><circle cx="281" cy="275.6" r="3.5"/><circle cx="283.6" cy="283.5" r="3.5"/><circle cx="314.6" cy="279.5" r="3.5"/><circle cx="324.8" cy="274.7" r="3.5"/><circle cx="335" cy="277.9" r="3.5"/><circle cx="301.1" cy="290.7" r="3.5"/><circle cx="303.9" cy="294.8" r="3.5"/><circle cx="356" cy="287.6" r="3.5"/><circle cx="338.4" cy="305" r="3.5"/><circle cx="368.7" cy="305.2" r="3.5"/><circle cx="274.6" cy="330.9" r="3.5"/><circle cx="221.7" cy="228" r="3.5"/></g><g fill="none" stroke="#000" stroke-width="1" shape-rendering="crispEdges"><rect x="78.5" y="123.5" width="335" height="215"/><path d="M117.9 338.5H379.4"/></g><path d="M117.9 338.5v9.500M183.3 338.5v9.500M248.6 338.5v9.500M314 338.5v9.500M379.4 338.5v9.500M78.5 124.5h-9.500M78.5 161.3h-9.500M78.5 198.1h-9.500M78.5 235h-9.500M78.5 271.8h-9.500M78.5 308.5h-9.500" fill="none" stroke="#000" stroke-width="1"/><text x="117.6" y="373.6" text-anchor="middle">-2</text><text x="183" y="373.6" text-anchor="middle">-1</text><text x="248.3" y="373.6" text-anchor="middle">0</text><text x="313.7" y="373.6" text-anchor="middle">1</text><text x="379.1" y="373.6" text-anchor="middle">2</text><text transform="translate(57.4 124.2) rotate(-90)" text-anchor="middle">3</text><text transform="translate(57.4 161) rotate(-90)" text-anchor="middle">2</text><text transform="translate(57.4 197.8) rotate(-90)" text-anchor="middle">1</text><text transform="translate(57.4 234.7) rotate(-90)" text-anchor="middle">0</text><text transform="translate(57.4 271.4) rotate(-90)" text-anchor="middle">-1</text><text transform="translate(57.4 308.2) rotate(-90)" text-anchor="middle">-2</text><text x="245.8" y="412.1" text-anchor="middle">x</text><text transform="translate(17.4 230.3) rotate(-90)" text-anchor="middle">y</text></svg></div>

</body></html>
